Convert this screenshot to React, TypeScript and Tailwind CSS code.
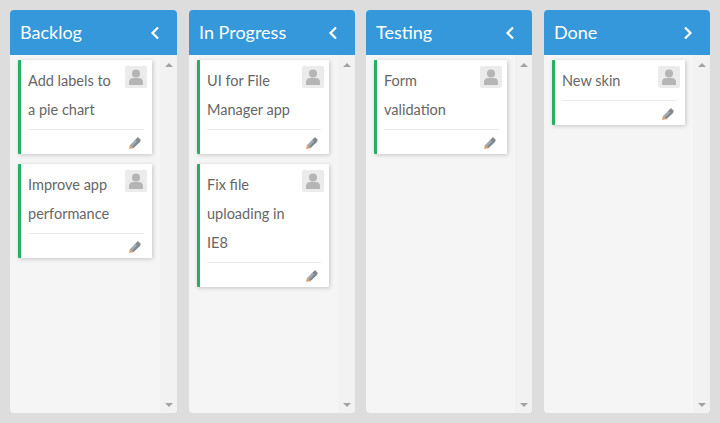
const cards: Record<string, string[][]> = {
  Backlog: [["Add labels to", "a pie chart"], ["Improve app", "performance"]],
  "In Progress": [["UI for File", "Manager app"], ["Fix file", "uploading in", "IE8"]],
  Testing: [["Form", "validation"]],
  Done: [["New skin"]],
};

function Avatar() {
  return (
    <div className="absolute right-[5px] top-[6px] w-[22px] h-[22px] rounded-[2px] bg-[#ebebeb]">
      <svg viewBox="0 0 22 22" className="w-[22px] h-[22px]">
        <circle cx="11" cy="7.500" r="4" fill="#b5b5b5" />
        <path d="M4 19v-3c0-2.500 2-4 4-4h6c2 0 4 1.500 4 4v3z" fill="#b5b5b5" />
      </svg>
    </div>
  );
}

function Pencil() {
  return (
    <svg viewBox="0 0 12 12" className="w-[12px] h-[12px]">
      <path d="M9 0l3 3-1.500 1.500-3-3z" fill="#8f8f8f" />
      <path d="M7 2l1.500-1 3 3-1 1.500-6.500 6-3-3z" fill="#7f8a90" />
      <path d="M6.500 3l1.500 1.500-5.500 5.500-1.500-1.500z" fill="#a5adb2" />
      <path d="M1 7.500l3.500 3.500-4.500 1z" fill="#d9a070" />
    </svg>
  );
}

function Card({ lines, width }: { lines: string[]; width: string }) {
  return (
    <div className={`${width} relative bg-white border-l-[3px] border-[#27ae60] shadow-[1px_1px_4px_rgba(0,0,0,0.2)] rounded-[1px]`}>
      <Avatar />
      <div className="pl-[7px] pt-[6px] pb-[5px] text-[14.500px] leading-[29px] text-[#666666]">
        {lines.map((l) => (
          <div key={l} className="whitespace-nowrap">{l}</div>
        ))}
      </div>
      <div className="ml-[7px] mr-[8px] border-t border-[#ebebeb] h-[25px] flex justify-end items-start pr-[3px] pt-[7px]">
        <Pencil />
      </div>
    </div>
  );
}

function Column({ title, open, className, cardWidth }: { title: string; open?: boolean; className: string; cardWidth: string }) {
  return (
    <div className={`${className} flex flex-col rounded-[4px] overflow-hidden bg-[#f5f5f5]`}>
      <div className="h-[45px] shrink-0 bg-[#3498db] flex items-center justify-between pl-[10px] pr-[17px] text-white text-[18px]">
        <span>{title}</span>
        <svg viewBox="0 0 10 14" className="w-[10px] h-[14px]">
          <path d={open ? "M2 1.500 7.500 7 2 12.500" : "M8 1.500 2.500 7 8 12.500"} fill="none" stroke="#ffffff" strokeWidth="2.200" />
        </svg>
      </div>
      <div className="flex-1 flex min-h-0">
        <div className="flex-1 pl-[8px] pt-[5px] flex flex-col gap-[10px]">
          {cards[title].map((c) => (
            <Card key={c[0]} lines={c} width={cardWidth} />
          ))}
        </div>
        <div className="w-[17px] shrink-0 bg-[#f2f2f2] flex flex-col justify-between items-center pt-[8px] pb-[6px]">
          <div className="w-0 h-0 border-x-[4px] border-x-transparent border-b-[4px] border-b-[#a3a3a3]" />
          <div className="w-0 h-0 border-x-[4px] border-x-transparent border-t-[4px] border-t-[#a3a3a3]" />
        </div>
      </div>
    </div>
  );
}

export default function App() {
  return (
    <div className="w-[720px] h-[423px] bg-[#dddddd] flex p-[10px] font-['Lato','Noto_Sans',sans-serif]">
      <Column title="Backlog" className="w-[167px] mr-[12px]" cardWidth="w-[134px]" />
      <Column title="In Progress" className="w-[166px] mr-[11px]" cardWidth="w-[132px]" />
      <Column title="Testing" className="w-[166px] mr-[12px]" cardWidth="w-[133px]" />
      <Column title="Done" open className="w-[166px]" cardWidth="w-[133px]" />
    </div>
  );
}
